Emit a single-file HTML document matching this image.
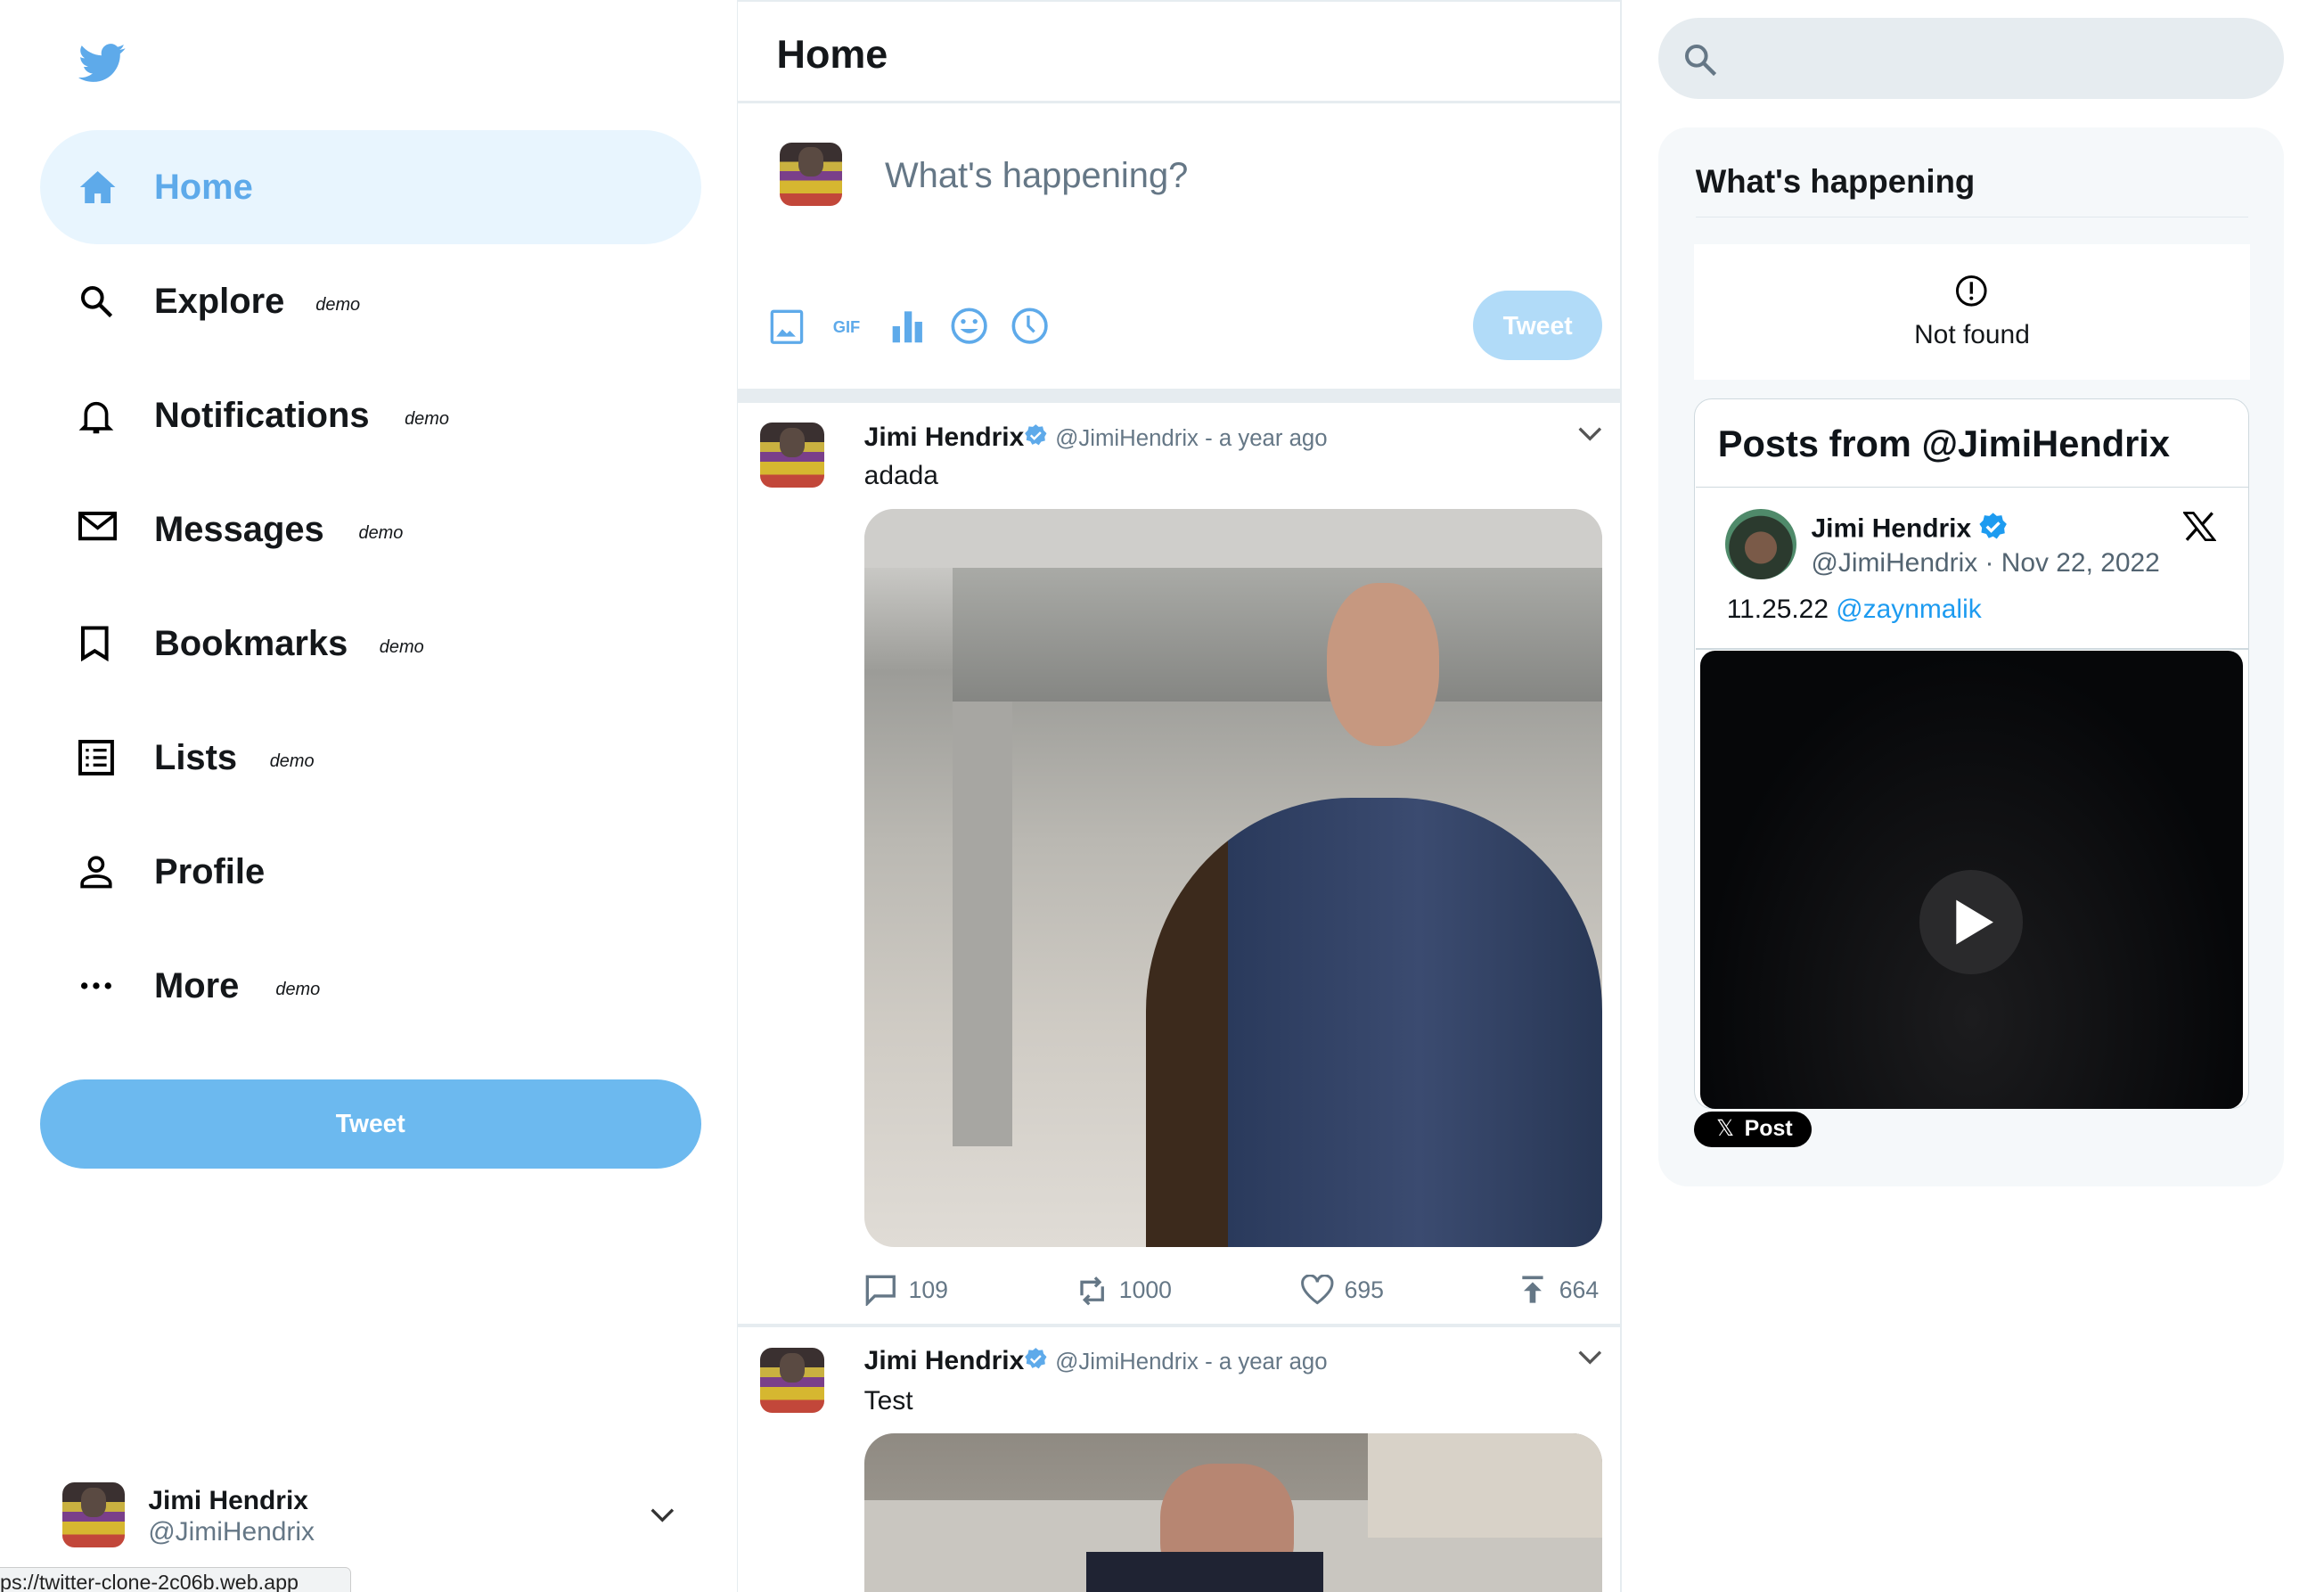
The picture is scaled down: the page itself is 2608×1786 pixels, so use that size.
<!DOCTYPE html>
<html><head><meta charset="utf-8"><style>
html,body{margin:0;padding:0;background:#fff;overflow:hidden;width:2608px;height:1786px}
#w{zoom:1.66327;width:1568px;height:1074px;position:relative;font-family:"Liberation Sans",sans-serif;color:#14171a}
.a{position:absolute}
.nav{position:absolute;left:27px;width:446px;height:77px}
.nav svg{position:absolute;left:26px;top:26px}
.nav .t{position:absolute;left:77px;top:25px;font-size:24px;font-weight:bold}
.nav .d{position:absolute;font-size:12px;font-style:italic;top:34px}
.av{position:absolute;border-radius:8px;background:linear-gradient(180deg,#3a3030 0 30%,#c9b140 30% 45%,#7a3f8a 45% 60%,#d6b730 60% 80%,#c2473a 80%);overflow:hidden}
.av:before{content:"";position:absolute;left:30%;top:8%;width:40%;height:45%;border-radius:40%;background:#5a4a42}
.gray{color:#657786}
</style></head><body><div id="w">
<!-- left -->
<svg class="a" style="left:53px;top:29px" width="32" height="28" viewBox="0 0 24 20"><path fill="#5eaaea" d="M23.6 2.3c-.9.4-1.8.6-2.8.8 1-.6 1.8-1.5 2.1-2.7-.9.6-2 1-3.1 1.2C19 .6 17.800 0 16.4 0c-2.7 0-4.8 2.2-4.8 4.8 0 .4 0 .8.1 1.1C7.7 5.7 4.1 3.8 1.7.9c-.4.7-.7 1.600-.7 2.4 0 1.7.9 3.200 2.2 4-.8 0-1.5-.2-2.2-.6v.1c0 2.3 1.700 4.3 3.900 4.7-.4.1-.8.2-1.300.2-.3 0-.6 0-.9-.1.6 1.900 2.400 3.300 4.500 3.400-1.700 1.300-3.700 2.100-6 2.100H0c2.100 1.400 4.700 2.200 7.400 2.200 8.900 0 13.700-7.400 13.700-13.700v-.6c.9-.7 1.800-1.500 2.500-2.500z"/></svg>
<div class="nav" style="top:88px;background:#e8f5fe;border-radius:39px"><svg width="26" height="24" viewBox="0 0 24 22"><path fill="#5eaaea" d="M12 1 1 11h3v10h6v-6h4v6h6V11h3z"/></svg><span class="t" style="color:#5eaaea">Home</span></div>
<div class="nav" style="top:165px"><svg width="24" height="24" viewBox="0 0 24 24"><circle cx="9.5" cy="9.5" r="6.5" fill="none" stroke="#000" stroke-width="2.4"/><path d="M14.5 14.5 22 22" stroke="#000" stroke-width="2.6"/></svg><span class="t">Explore</span><span class="d" style="left:186px">demo</span></div>
<div class="nav" style="top:242px"><svg width="24" height="26" viewBox="0 0 24 26"><path d="M5 19V11a7 7 0 0 1 14 0v8l2 2H3z" fill="none" stroke="#000" stroke-width="2.2"/><path d="M10 23h4" stroke="#000" stroke-width="2.4"/></svg><span class="t">Notifications</span><span class="d" style="left:246px">demo</span></div>
<div class="nav" style="top:319px"><svg width="26" height="20" viewBox="0 0 26 20"><rect x="1.2" y="1.2" width="23.6" height="17" fill="none" stroke="#000" stroke-width="2.4"/><path d="M1.5 2 13 11 24.5 2" fill="none" stroke="#000" stroke-width="2.2"/></svg><span class="t">Messages</span><span class="d" style="left:215px">demo</span></div>
<div class="nav" style="top:396px"><svg width="22" height="24" viewBox="0 0 22 24"><path d="M3 1.5h16V22l-8-5-8 5z" fill="none" stroke="#000" stroke-width="2.4"/></svg><span class="t">Bookmarks</span><span class="d" style="left:229px">demo</span></div>
<div class="nav" style="top:473px"><svg width="24" height="24" viewBox="0 0 24 24"><rect x="1.2" y="1.2" width="21.6" height="21.6" fill="none" stroke="#000" stroke-width="2.4"/><path d="M5 7h2M10 7h9M5 12h2M10 12h9M5 17h2M10 17h9" stroke="#000" stroke-width="2"/></svg><span class="t">Lists</span><span class="d" style="left:155px">demo</span></div>
<div class="nav" style="top:550px"><svg width="24" height="24" viewBox="0 0 24 24"><circle cx="12" cy="7" r="4.5" fill="none" stroke="#000" stroke-width="2.2"/><path d="M2.5 22v-2c0-3 4-5 9.5-5s9.5 2 9.5 5v2z" fill="none" stroke="#000" stroke-width="2.2"/></svg><span class="t">Profile</span></div>
<div class="nav" style="top:627px"><svg width="24" height="24" viewBox="0 0 24 24"><circle cx="4" cy="12" r="2.2"/><circle cx="12" cy="12" r="2.2"/><circle cx="20" cy="12" r="2.2"/></svg><span class="t">More</span><span class="d" style="left:159px">demo</span></div>
<div class="a" style="left:27px;top:728px;width:446px;height:60px;border-radius:30px;background:#6cb9ef;color:#fff;font-weight:bold;font-size:17px;text-align:center;line-height:60px">Tweet</div>
<div class="av" style="left:42px;top:1000px;width:42px;height:44px"></div>
<div class="a" style="left:100px;top:1002px;font-size:18px;font-weight:bold">Jimi Hendrix</div>
<div class="a gray" style="left:100px;top:1023px;font-size:18px">@JimiHendrix</div>
<svg class="a" style="left:439px;top:1017px" width="16" height="10" viewBox="0 0 16 10"><path d="M1 1l7 7 7-7" fill="none" stroke="#333" stroke-width="2"/></svg>
<div class="a" style="left:0;top:1057px;width:236px;height:17px;background:#f1f3f4;border:1px solid #ccc;border-left:0;border-radius:0 4px 0 0;font-size:14px;line-height:20px;color:#222;overflow:hidden;white-space:nowrap">ps://twitter-clone-2c06b.web.app</div>
<!-- center -->
<div class="a" style="left:497px;top:0;width:1px;height:1074px;background:#e6ecf0"></div>
<div class="a" style="left:1093px;top:0;width:1px;height:1074px;background:#e6ecf0"></div>
<div class="a" style="left:498px;top:68px;width:595px;height:2px;background:#e6ecf0"></div>
<div class="a" style="left:498px;top:0;width:595px;height:1px;background:#e6ecf0"></div>
<div class="a" style="left:524px;top:21px;font-size:27px;font-weight:bold">Home</div>
<div class="av" style="left:526px;top:96px;width:42px;height:43px"></div>
<div class="a gray" style="left:597px;top:105px;font-size:24px">What's happening?</div>
<svg class="a" style="left:519px;top:208px" width="24" height="24" viewBox="0 0 24 24"><rect x="2" y="2" width="20" height="21" rx="1" fill="none" stroke="#5eaaea" stroke-width="2"/><path d="M5 19l4-5 3 3 2-2 4 4z" fill="#5eaaea"/></svg>
<div class="a" style="left:562px;top:214px;font-size:11px;font-weight:bold;color:#5eaaea">GIF</div>
<svg class="a" style="left:601px;top:208px" width="22" height="24" viewBox="0 0 22 24"><rect x="1" y="12" width="5" height="11" fill="#5eaaea"/><rect x="9" y="2" width="5" height="21" fill="#5eaaea"/><rect x="16" y="9" width="5" height="14" fill="#5eaaea"/></svg>
<svg class="a" style="left:641px;top:207px" width="26" height="26" viewBox="0 0 26 26"><circle cx="13" cy="13" r="11" fill="none" stroke="#5eaaea" stroke-width="2.2"/><circle cx="9" cy="10" r="1.6" fill="#5eaaea"/><circle cx="17" cy="10" r="1.6" fill="#5eaaea"/><path d="M7 15q6 6 12 0z" fill="#5eaaea"/></svg>
<svg class="a" style="left:682px;top:207px" width="26" height="26" viewBox="0 0 26 26"><circle cx="13" cy="13" r="11" fill="none" stroke="#5eaaea" stroke-width="2.2"/><path d="M12 6v7l4 4" fill="none" stroke="#5eaaea" stroke-width="2"/></svg>
<div class="a" style="left:994px;top:196px;width:87px;height:47px;border-radius:24px;background:#b1dbf8;color:#fff;font-weight:bold;font-size:17px;text-align:center;line-height:47px">Tweet</div>
<div class="a" style="left:498px;top:262px;width:595px;height:10px;background:#e6ecf0"></div>
<!-- tweet1 -->
<div class="av" style="left:513px;top:285px;width:43px;height:44px"></div>
<div class="a" style="left:583px;top:285px;font-size:18px;white-space:nowrap"><b>Jimi Hendrix</b><svg width="16" height="16" viewBox="0 0 24 24" style="vertical-align:-1px"><path fill="#5eaaea" d="M12 1l3 2.5 4-.5 1 4 3 3-2 3.5.5 4-4 1-2.5 3.5-3-2-3.5 1.5-2-3.5-4-1 .5-4L1 10l3-3 1-4 4 .5z"/><path d="M7 12l3.5 3.5L17 9" stroke="#fff" stroke-width="2.2" fill="none"/></svg> <span class="gray" style="font-size:15.5px">@JimiHendrix - a year ago</span></div>
<svg class="a" style="left:1065px;top:288px" width="16" height="10" viewBox="0 0 16 10"><path d="M1 1l7 7 7-7" fill="none" stroke="#555" stroke-width="2"/></svg>
<div class="a" style="left:583px;top:311px;font-size:18px">adada</div>
<div class="a" style="left:583px;top:343px;width:498px;height:498px;border-radius:20px;overflow:hidden;background:linear-gradient(180deg,#e2e1de 0%,#9c9c98 22%,#bab8b2 45%,#cfcbc4 70%,#e0dcd6 100%)">
 <div class="a" style="left:0;top:0;width:498px;height:40px;background:#cfcecb"></div>
 <div class="a" style="left:60px;top:40px;width:438px;height:90px;background:linear-gradient(180deg,#a9aaa6,#858683)"></div>
 <div class="a" style="left:60px;top:130px;width:40px;height:300px;background:#a7a6a2"></div>
 <div class="a" style="left:190px;top:195px;width:308px;height:320px;border-radius:45% 45% 0 0;background:linear-gradient(90deg,#3c2a1c 0 18%,#2a3a5c 18%,#3b4b70 60%,#283755)"></div>
 <div class="a" style="left:312px;top:50px;width:76px;height:110px;border-radius:45%;background:#c69880"></div>
</div>
<svg class="a" style="left:583px;top:859px" width="22" height="22" viewBox="0 0 22 22"><path d="M2 2h18v13H7l-5 5z" fill="none" stroke="#657786" stroke-width="2"/></svg>
<div class="a gray" style="left:613px;top:861px;font-size:16px">109</div>
<svg class="a" style="left:727px;top:860px" width="20" height="22" viewBox="0 0 20 22"><path d="M3 14V5h12M12 2l3 3-3 3M17 8v9H5M8 20l-3-3 3-3" fill="none" stroke="#657786" stroke-width="2"/></svg>
<div class="a gray" style="left:755px;top:861px;font-size:16px">1000</div>
<svg class="a" style="left:878px;top:860px" width="22" height="20" viewBox="0 0 22 20"><path d="M11 19S1 12 1 6a5 5 0 0 1 10-1 5 5 0 0 1 10 1c0 6-10 13-10 13z" fill="none" stroke="#657786" stroke-width="1.8"/></svg>
<div class="a gray" style="left:907px;top:861px;font-size:16px">695</div>
<svg class="a" style="left:1025px;top:860px" width="18" height="20" viewBox="0 0 18 20"><path d="M2 2h14" stroke="#657786" stroke-width="2.2"/><path d="M9 5l-6 6h4v8h4v-8h4z" fill="#657786"/></svg>
<div class="a gray" style="left:1052px;top:861px;font-size:16px">664</div>
<div class="a" style="left:498px;top:893px;width:595px;height:2px;background:#e6ecf0"></div>
<!-- tweet2 -->
<div class="av" style="left:513px;top:909px;width:43px;height:44px"></div>
<div class="a" style="left:583px;top:908px;font-size:18px;white-space:nowrap"><b>Jimi Hendrix</b><svg width="16" height="16" viewBox="0 0 24 24" style="vertical-align:-1px"><path fill="#5eaaea" d="M12 1l3 2.5 4-.5 1 4 3 3-2 3.5.5 4-4 1-2.5 3.5-3-2-3.5 1.5-2-3.5-4-1 .5-4L1 10l3-3 1-4 4 .5z"/><path d="M7 12l3.5 3.5L17 9" stroke="#fff" stroke-width="2.2" fill="none"/></svg> <span class="gray" style="font-size:15.5px">@JimiHendrix - a year ago</span></div>
<svg class="a" style="left:1065px;top:911px" width="16" height="10" viewBox="0 0 16 10"><path d="M1 1l7 7 7-7" fill="none" stroke="#555" stroke-width="2"/></svg>
<div class="a" style="left:583px;top:935px;font-size:18px">Test</div>
<div class="a" style="left:583px;top:967px;width:498px;height:120px;border-radius:20px 20px 0 0;overflow:hidden;background:linear-gradient(180deg,#8f8a82,#a8a49c)">
 <div class="a" style="left:0;top:45px;width:498px;height:80px;background:#c9c6c0"></div>
 <div class="a" style="left:340px;top:0;width:158px;height:70px;background:#d8d2c8"></div>
 <div class="a" style="left:200px;top:20px;width:90px;height:90px;border-radius:40%;background:#b78672"></div>
 <div class="a" style="left:150px;top:80px;width:160px;height:40px;background:#1f2333"></div>
</div>
<!-- right -->
<div class="a" style="left:1119px;top:12px;width:422px;height:55px;border-radius:28px;background:#e6ecf0"></div>
<svg class="a" style="left:1135px;top:28px" width="24" height="24" viewBox="0 0 24 24"><circle cx="9.5" cy="9.5" r="6.5" fill="none" stroke="#657786" stroke-width="2.4"/><path d="M14.5 14.5 22 22" stroke="#657786" stroke-width="2.6"/></svg>
<div class="a" style="left:1119px;top:86px;width:422px;height:714px;border-radius:20px;background:#f5f8fa"></div>
<div class="a" style="left:1144px;top:110px;font-size:22px;font-weight:bold">What's happening</div>
<div class="a" style="left:1144px;top:146px;width:373px;height:1px;background:#e1e8ed"></div>
<div class="a" style="left:1143px;top:165px;width:375px;height:91px;background:#fff"></div>
<svg class="a" style="left:1319px;top:185px" width="22" height="22" viewBox="0 0 22 22"><circle cx="11" cy="11" r="9.5" fill="none" stroke="#000" stroke-width="1.8"/><path d="M11 5v8" stroke="#000" stroke-width="2"/><circle cx="11" cy="16" r="1.2"/></svg>
<div class="a" style="left:1143px;top:216px;width:375px;text-align:center;font-size:18px">Not found</div>
<div class="a" style="left:1143px;top:269px;width:373px;height:478px;border:1px solid #cfd9de;border-radius:12px;background:#fff"></div>
<div class="a" style="left:1159px;top:285px;font-size:25px;font-weight:bold;color:#0f1419">Posts from @JimiHendrix</div>
<div class="a" style="left:1144px;top:328px;width:373px;height:1px;background:#cfd9de"></div>
<div class="a" style="left:1164px;top:343px;width:48px;height:48px;border-radius:50%;background:radial-gradient(circle at 50% 55%,#7a5a48 0 30%,#2b3a2e 31% 60%,#4f8a6a 61%)"></div>
<div class="a" style="left:1222px;top:345px;font-size:18px;font-weight:bold;color:#0f1419;white-space:nowrap">Jimi Hendrix <svg width="20" height="20" viewBox="0 0 24 24" style="vertical-align:-3px"><path fill="#1d9bf0" d="M12 1l3 2.5 4-.5 1 4 3 3-2 3.5.5 4-4 1-2.5 3.5-3-2-3.5 1.5-2-3.5-4-1 .5-4L1 10l3-3 1-4 4 .5z"/><path d="M7 12l3.5 3.5L17 9" stroke="#fff" stroke-width="2.4" fill="none"/></svg></div>
<div class="a" style="left:1222px;top:370px;font-size:18px;color:#536471;white-space:nowrap">@JimiHendrix · Nov 22, 2022</div>
<svg class="a" style="left:1473px;top:345px" width="22" height="20" viewBox="0 0 24 22"><path d="M1 1h6.5L23 21h-6.5z" fill="none" stroke="#000" stroke-width="1.8"/><path d="M21.5 1 13.5 10M2.5 21l8-9" stroke="#000" stroke-width="2.2"/></svg>
<div class="a" style="left:1165px;top:401px;font-size:18px;color:#0f1419;white-space:nowrap">11.25.22 <span style="color:#1d9bf0">@zaynmalik</span></div>
<div class="a" style="left:1144px;top:437px;width:373px;height:1px;background:#cfd9de"></div>
<div class="a" style="left:1147px;top:439px;width:366px;height:309px;border-radius:10px;background:radial-gradient(ellipse at 50% 80%,#1c1c1e,#060709 70%)"></div>
<div class="a" style="left:1295px;top:587px;width:70px;height:70px;border-radius:50%;background:#2a2a2c"></div>
<svg class="a" style="left:1318px;top:606px" width="28" height="32" viewBox="0 0 28 32"><path d="M2 1l25 15L2 31z" fill="#fff"/></svg>
<div class="a" style="left:1143px;top:750px;width:79px;height:24px;border-radius:12px;background:#000;color:#fff;font-size:15px;font-weight:bold;line-height:24px;white-space:nowrap"><span style="position:absolute;left:15px;font-weight:normal">𝕏</span><span style="position:absolute;left:34px">Post</span></div>
</div></body></html>
